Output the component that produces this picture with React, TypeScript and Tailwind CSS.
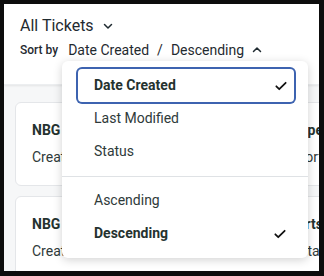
import React from 'react';

const Check = () => (
  <svg width="14" height="14" viewBox="0 0 24 24" fill="none" stroke="#111" strokeWidth="3" strokeLinecap="round" strokeLinejoin="round">
    <path d="M4 12.5l5 5L20 6.5" />
  </svg>
);

const Chevron = ({ up }: { up?: boolean }) => (
  <svg width="12" height="12" viewBox="0 0 24 24" fill="none" stroke="#1f2a30" strokeWidth="3" strokeLinecap="round" strokeLinejoin="round">
    <path d={up ? 'M5 15l7-7 7 7' : 'M5 9l7 7 7-7'} />
  </svg>
);

const TicketCard = ({ right1, right2 }: { right1: string; right2: string }) => (
  <div className="w-[325px] h-[84px] shrink-0 bg-white border border-[#e4e6e9] rounded-md px-4 pt-[15px] flex flex-col gap-[5px]">
    <div className="flex justify-between text-[14px] font-bold text-[#25322f] leading-[24px]">
      <span>NBG</span>
      <span>{right1}</span>
    </div>
    <div className="flex justify-between text-[14px] text-[#2f3a3a] leading-[20px]">
      <span>Created</span>
      <span>{right2}</span>
    </div>
  </div>
);

const SortMenu = () => (
  <div className="absolute left-[58px] top-[57px] w-[246px] h-[197px] bg-white rounded-md shadow-[0_2px_10px_rgba(0,0,0,0.18)] pt-[8px] text-[14px] text-[#2f3a3a]">
    <div className="ml-[16px] mr-[14px] h-[33px] flex items-center justify-between pl-4 pr-[6px] rounded-[4px] shadow-[0_0_0_2px_#3d63b0] font-bold text-[#25322f]">
      <span>Date Created</span>
      <Check />
    </div>
    <div className="ml-[16px] mr-[14px] h-[33px] flex items-center pl-4">Last Modified</div>
    <div className="ml-[16px] mr-[14px] h-[33px] flex items-center pl-4">Status</div>
    <div className="mt-[8px] mb-[7px] h-px bg-[#dfe2e5]" />
    <div className="ml-[16px] mr-[14px] h-[33px] flex items-center pl-4">Ascending</div>
    <div className="ml-[16px] mr-[14px] h-[33px] flex items-center justify-between pl-4 pr-[7px] font-bold text-[#25322f]">
      <span>Descending</span>
      <Check />
    </div>
  </div>
);

export default function App() {
  return (
    <div className="w-[324px] h-[276px] bg-[#0d0d0d] pl-[4px] pt-[4px]" style={{ fontFamily: 'Roboto, "Liberation Sans", sans-serif' }}>
      <div className="relative w-[315px] h-[267px] bg-[#f6f7f8] overflow-hidden">
        {/* header */}
        <div className="h-[81px] bg-white shadow-[0_1px_2px_rgba(0,0,0,0.08)] border-b border-[#eceef0] px-4 pt-[11px]">
          <div className="flex items-center gap-[8px] text-[16px] text-[#1f2a30] leading-[22px]">
            <span>All Tickets</span>
            <Chevron />
          </div>
          <div className="flex items-center mt-[2px] h-[22px] text-[#1f2a30]">
            <span className="text-[12px] font-medium mr-[10px]">Sort by</span>
            <span className="text-[14px]">Date Created</span>
            <span className="text-[14px] mx-[8px]">/</span>
            <span className="text-[14px]">Descending</span>
            <span className="ml-[7px]"><Chevron up /></span>
          </div>
        </div>
        {/* tickets */}
        <div className="flex flex-col gap-[10px] pl-[11px] pt-[17px]">
          <TicketCard right1="Type" right2="Support" />
          <TicketCard right1="Reports" right2="Portal" />
        </div>
        <SortMenu />
      </div>
    </div>
  );
}
